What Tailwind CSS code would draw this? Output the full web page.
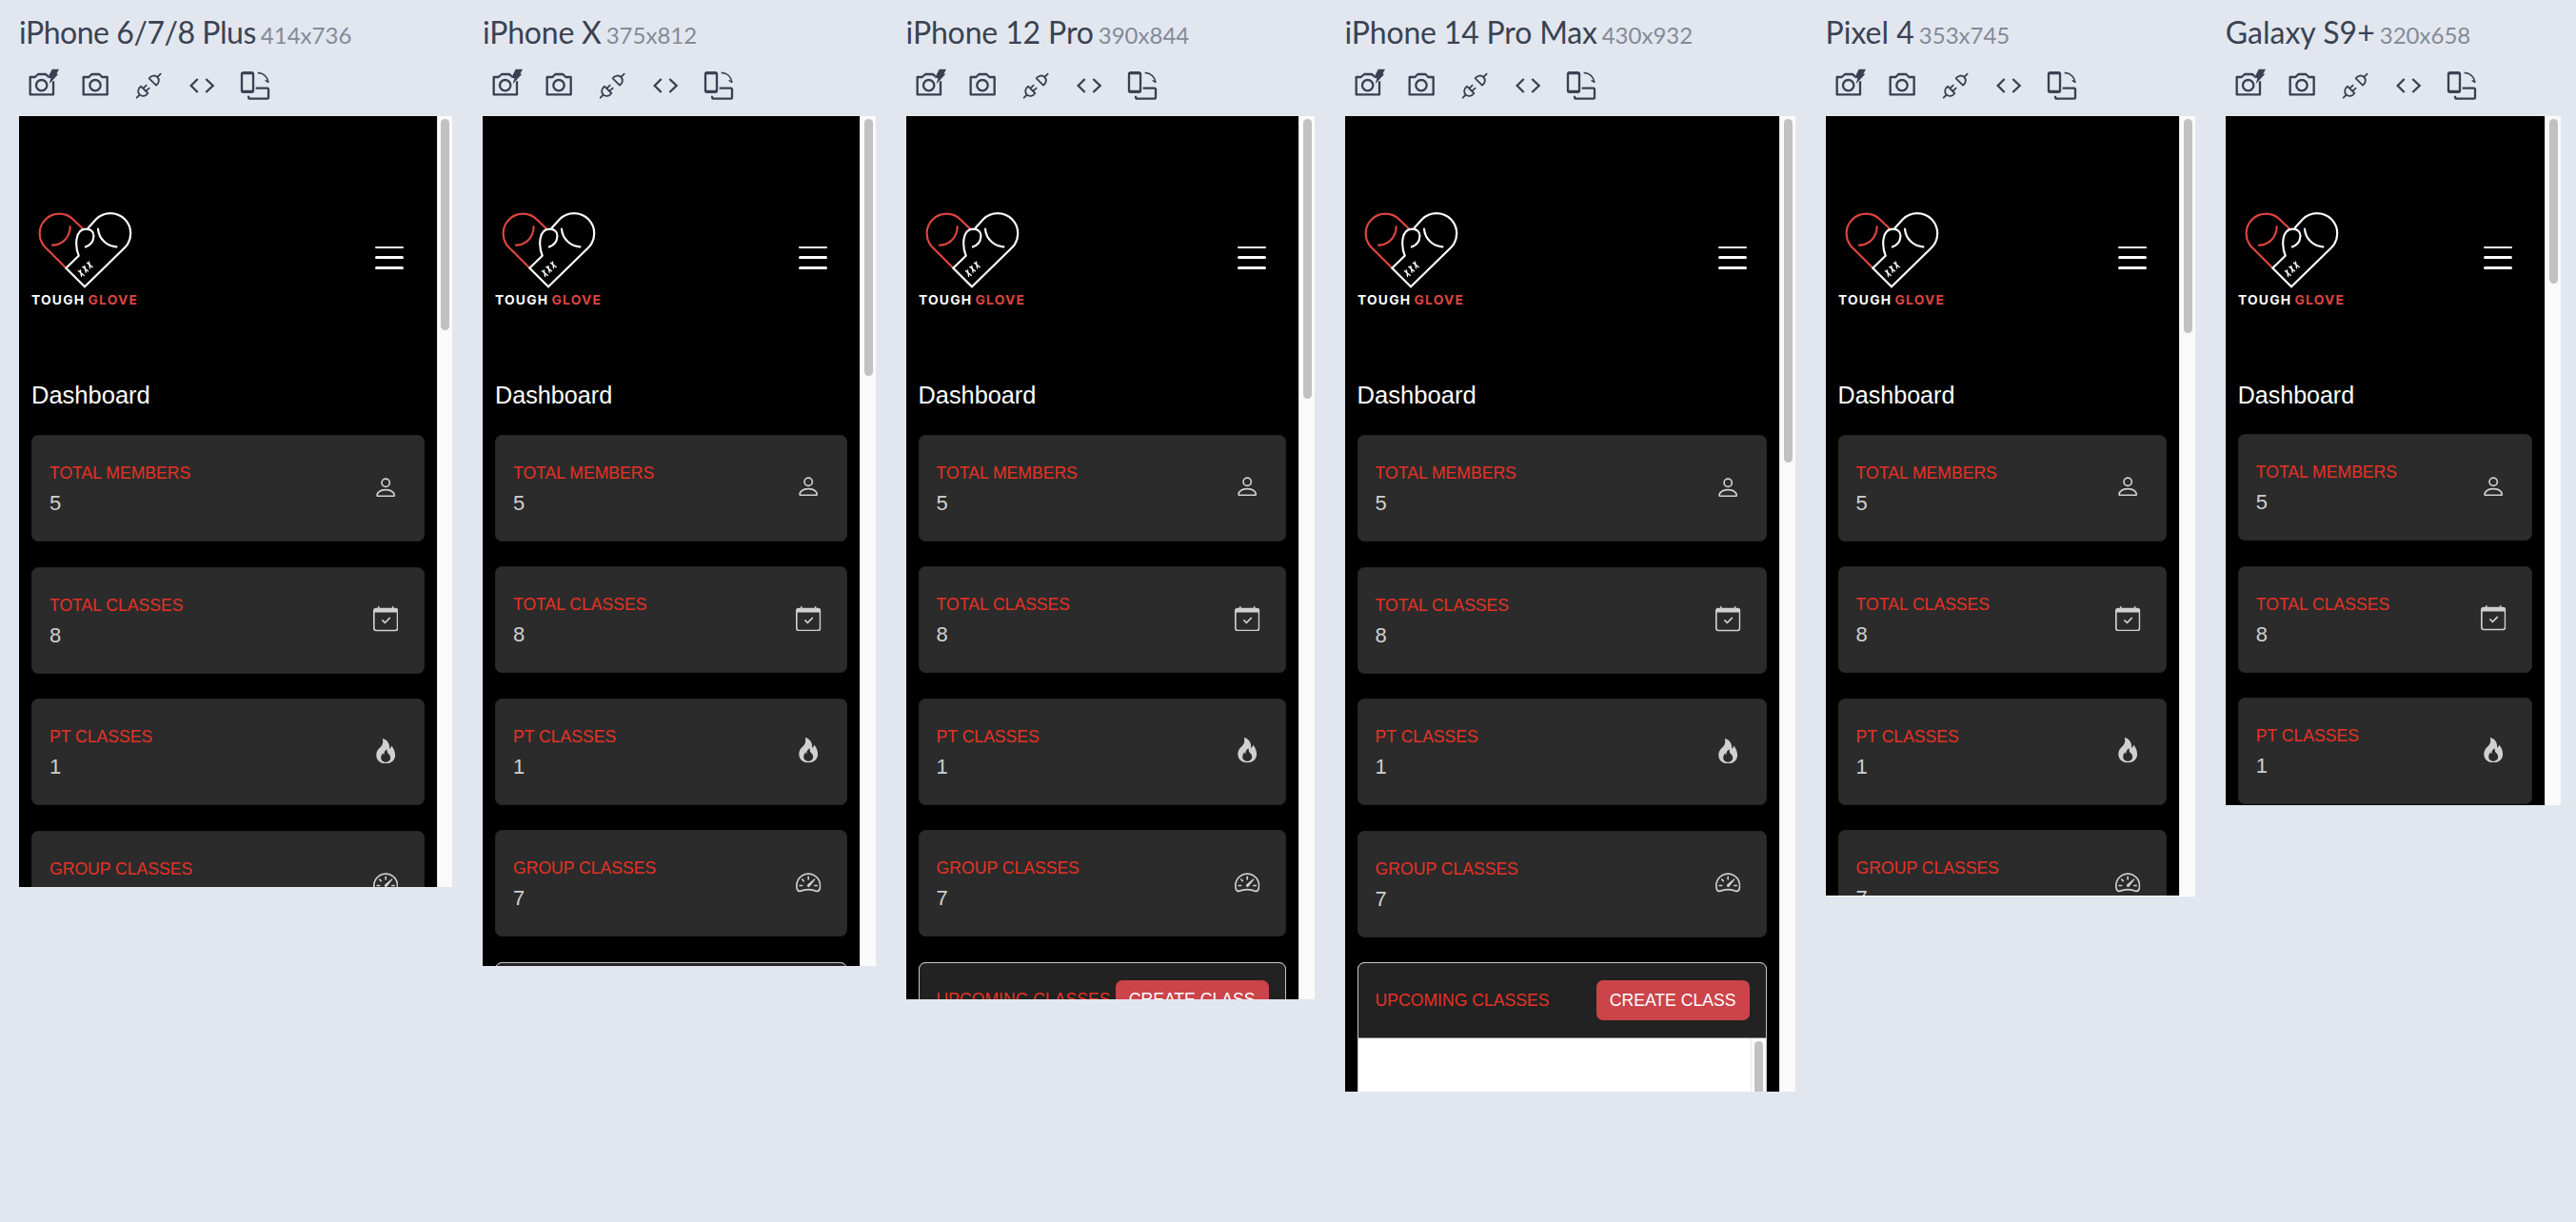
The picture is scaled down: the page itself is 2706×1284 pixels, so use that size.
<!DOCTYPE html>
<html lang="en">
<head>
<meta charset="utf-8">
<title>Responsive preview</title>
<script src="https://cdn.jsdelivr.net/npm/@tailwindcss/browser@4"></script>
</head>
<body class="bg-[#e2e7ef] h-[1284px] overflow-hidden">
<svg class="hidden" xmlns="http://www.w3.org/2000/svg">
  <symbol id="camera" viewBox="0 0 96 96"><g fill="none" stroke="currentColor" stroke-width="7" stroke-linejoin="round"><path d="M11 21H28L37 12H61L70 21H86V76H11Z"/><circle cx="48" cy="47" r="17"/></g></symbol>
  <symbol id="camera-flash" viewBox="0 0 108 108" overflow="visible"><g transform="translate(0 12)"><g fill="none" stroke="currentColor" stroke-width="7" stroke-linejoin="round"><path d="M84 34V76H11V21H26L36 12H60L68 19"/><circle cx="47" cy="47" r="17"/></g><path fill="currentColor" d="M80-4H102L94 11H100L71 43L76 24H66Z"/></g></symbol>
  <symbol id="plug" viewBox="0 0 96 96"><g fill="none" stroke="currentColor" stroke-width="5.5" stroke-linecap="round" stroke-linejoin="round"><path d="M11 86L19 78M24 50L46 72C39 82 27 83 20 76C13 69 14 57 24 50ZM32 56L41 47M40 65L50 56M50 25L72 47C82 40 83 28 76 21C69 14 57 15 50 25ZM77 20L86 11"/></g></symbol>
  <symbol id="code" viewBox="0 0 96 96"><path fill="none" stroke="currentColor" stroke-width="7" d="M35 27L14 48L35 69M61 27L83 48L61 69"/></symbol>
  <symbol id="rotate" viewBox="0 0 96 96"><g fill="none" stroke="currentColor" stroke-width="7"><rect x="6" y="7" width="36" height="61" rx="4"/><path stroke-width="9" d="M8 8H40M8 67H40"/><path d="M50 56H86Q90 56 90 60V85Q90 89 86 89H31Q27 89 27 80"/><path stroke-width="5" d="M56 7C74 8 87 20 90 38"/><path stroke-width="4" d="M80 31L90 38"/></g></symbol>
  <symbol id="person" viewBox="0 0 16 16"><path fill="currentColor" d="M8 8a3 3 0 1 0 0-6 3 3 0 0 0 0 6m2-3a2 2 0 1 1-4 0 2 2 0 0 1 4 0m4 8c0 1-1 1-1 1H3s-1 0-1-1 1-4 6-4 6 3 6 4m-1-.004c-.001-.246-.154-.986-.832-1.664C11.516 10.68 10.289 10 8 10s-3.516.68-4.168 1.332c-.678.678-.83 1.418-.832 1.664z"/></symbol>
  <symbol id="calendar" viewBox="0 0 16 16"><path fill="currentColor" d="M10.854 7.146a.5.5 0 0 1 0 .708l-3 3a.5.5 0 0 1-.708 0l-1.5-1.5a.5.5 0 1 1 .708-.708L7.5 9.793l2.646-2.647a.5.5 0 0 1 .708 0"/><path fill="currentColor" d="M3.5 0a.5.5 0 0 1 .5.5V1h8V.5a.5.5 0 0 1 1 0V1h1a2 2 0 0 1 2 2v11a2 2 0 0 1-2 2H2a2 2 0 0 1-2-2V3a2 2 0 0 1 2-2h1V.5a.5.5 0 0 1 .5-.5M1 4v10a1 1 0 0 0 1 1h12a1 1 0 0 0 1-1V4z"/></symbol>
  <symbol id="fire" viewBox="0 0 16 16"><path fill="currentColor" d="M8 16c3.314 0 6-2 6-5.5 0-1.5-.5-4-2.5-6 .25 1.5-1.25 2-1.25 2C11 4 9 .5 6 0c.357 2 .5 4-2 6-1.25 1-2 2.729-2 4.5C2 14 4.686 16 8 16m0-1c-1.657 0-3-1-3-2.75 0-.75.25-2 1.25-3C6.125 10 7 10.5 7 10.5c-.375-1.25.5-3.25 2-3.5-.179 1-.25 2 1 3 .625.5 1 1.364 1 2.25C11 14 9.657 15 8 15"/></symbol>
  <symbol id="speed" viewBox="0 0 16 16"><path fill="currentColor" d="M8 4a.5.5 0 0 1 .5.5V6a.5.5 0 0 1-1 0V4.5A.5.5 0 0 1 8 4M3.732 5.732a.5.5 0 0 1 .707 0l.915.914a.5.5 0 1 1-.708.708l-.914-.915a.5.5 0 0 1 0-.707M2 10a.5.5 0 0 1 .5-.5h1.586a.5.5 0 0 1 0 1H2.5A.5.5 0 0 1 2 10m9.500 0a.5.5 0 0 1 .5-.5h1.500a.5.5 0 0 1 0 1H12a.5.5 0 0 1-.5-.5m.754-4.246a.39.39 0 0 0-.527-.02L7.547 9.310a.91.91 0 1 0 1.302 1.258l3.434-4.297a.39.39 0 0 0-.029-.518z"/><path fill="currentColor" d="M0 10a8 8 0 1 1 15.547 2.661c-.442 1.253-1.845 1.602-2.932 1.25C11.309 13.488 9.475 13 8 13c-1.474 0-3.310.488-4.615.911-1.087.352-2.490.003-2.932-1.25A8 8 0 0 1 0 10m8-7a7 7 0 0 0-6.603 9.329c.203.575.923.876 1.680.63C4.397 12.533 6.358 12 8 12s3.604.532 4.923.96c.757.245 1.477-.056 1.680-.631A7 7 0 0 0 8 3"/></symbol>
  <symbol id="heart" viewBox="39 45 333 260"><g fill="none" stroke-width="6.5" stroke-linecap="round">
    <path stroke="#dc4540" d="M147 229L83 165A62 62 0 0 1 171 77L201 106M161 99C161 134 134 158 105 158"/>
    <path stroke="#fff" stroke-linecap="butt" stroke-linejoin="miter" d="M217 104L243 76A63 63 0 0 1 333 166L207 289L148 230L188 191C176 160 176 108 210 107C226 106 237 116 235 131C234 147 224 159 207 164"/>
    <path stroke="#fff" d="M249 107C252 141 279 161 307 163"/>
    <path stroke="#fff" stroke-width="4" stroke-linecap="butt" d="M186 238L206 254M193 235L197 258M199 225L219 241M206 222L211 245M213 212L233 228M220 209L224 232"/></g></symbol>
</svg>

<main id="devices" class="flex items-start gap-8 pl-5 pt-[13px]"></main>

<script>
const devices = [
  { name: 'iPhone 6/7/8 Plus', size: '414x736', w: 455, h: 810, thumb: 222, top: 60, h1: 25.5, track: -0.46 },
  { name: 'iPhone X', size: '375x812', w: 412.6, h: 893, thumb: 270, top: 59.5, h1: 25.2, track: -0.2 },
  { name: 'iPhone 12 Pro', size: '390x844', w: 429, h: 928, thumb: 294, top: 59.5, h1: 25.3, track: -0.13 },
  { name: 'iPhone 14 Pro Max', size: '430x932', w: 473, h: 1025, thumb: 361, top: 60, h1: 25.6, track: -0.18 },
  { name: 'Pixel 4', size: '353x745', w: 388.2, h: 820, thumb: 225, top: 59.5, h1: 25.1, track: 0, edge: 'border-b border-white' },
  { name: 'Galaxy S9+', size: '320x658', w: 352, h: 724, thumb: 173, top: 59, h1: 25, track: 0 },
];
const stats = [
  ['TOTAL MEMBERS', 5, 'person'],
  ['TOTAL CLASSES', 8, 'calendar'],
  ['PT CLASSES', 1, 'fire'],
  ['GROUP CLASSES', 7, 'speed'],
];
const card = ([label, value, icon]) => `
  <div class="flex h-[112px] shrink-0 items-center justify-between rounded-[7px] border border-[#252525] bg-[#2b2b2b] pl-[18px] pr-[26.5px]">
    <div class="mt-[3px]">
      <div class="text-[17.6px] leading-[28px] text-[#e53225] whitespace-nowrap">${label}</div>
      <div class="text-[22px] leading-[35px] text-[#d0d0d0]">${value}</div>
    </div>
    <svg class="size-[26.4px] text-[#d0d0d0] -mt-0.5"><use href="#${icon}"/></svg>
  </div>`;
document.getElementById('devices').innerHTML = devices.map(d => `
  <section class="shrink-0" style="width:${d.w}px">
    <h2 class="flex h-[45px] items-baseline gap-[5px] whitespace-nowrap font-['Lato',sans-serif] text-[32px] leading-[42px] text-[#3a4252]"><span style="letter-spacing:${d.track}px">${d.name}</span><span class="text-[24px] text-[#848a96]">${d.size}</span></h2>
    <div class="flex h-16 gap-6 pl-2 pt-4 text-[#3a4050]">
      <svg class="-mt-1 h-9 w-9 -mr-1 shrink-0"><use href="#camera-flash"/></svg>
      <svg class="size-8"><use href="#camera"/></svg>
      <svg class="size-8"><use href="#plug"/></svg>
      <svg class="size-8"><use href="#code"/></svg>
      <svg class="size-8"><use href="#rotate"/></svg>
    </div>
    <div class="flex overflow-hidden bg-black font-['Liberation_Sans',Arial,sans-serif] ${d.edge || ''}" style="height:${d.h}px">
      <div class="flex min-w-0 grow flex-col px-[13px]">
        <header class="flex h-[275px] shrink-0 items-start justify-between pt-[98px]">
          <div class="w-[111px]">
            <svg class="h-[86.7px] w-[111px]"><use href="#heart"/></svg>
            <svg class="h-[18px] w-[112px] font-['Inter',sans-serif] text-[13.8px] font-bold"><text x="0" y="13.300" textLength="55" fill="#fff">TOUGH</text><text x="59.500" y="13.300" textLength="51.500" fill="#dc4540">GLOVE</text></svg>
          </div>
          <div class="mr-[21.5px] mt-[37.5px] flex flex-col gap-[8.6px] pt-[1px]">
            <span class="h-[2.4px] w-[30px] rounded-full bg-white"></span>
            <span class="h-[2.4px] w-[30px] rounded-full bg-white"></span>
            <span class="h-[2.4px] w-[30px] rounded-full bg-white"></span>
          </div>
        </header>
        <h1 class="shrink-0 leading-[36px] text-white" style="height:${d.top}px;font-size:${d.h1}px">Dashboard</h1>
        <div class="flex flex-col gap-[26.5px]">
          ${stats.map(card).join('')}
          <div class="h-[300px] shrink-0 overflow-hidden rounded-t-[7px] border border-[#c4c4c4] bg-white">
            <div class="flex h-[79px] items-center justify-between border-b border-[#777] bg-[#222] pl-[18px] pr-[17.5px]">
              <span class="text-[17.6px] text-[#e53225] whitespace-nowrap">UPCOMING CLASSES</span>
              <span class="flex h-[42px] w-[161px] shrink-0 items-center justify-center rounded-[7px] bg-[#cb444a] text-[17.6px] text-white whitespace-nowrap">CREATE CLASS</span>
            </div>
            <div class="flex h-full justify-end"><div class="w-4 border-l border-[#e8e8e8] bg-[#fafafa] pl-[3px] pt-[3px]"><div class="h-[200px] w-[9px] rounded-full bg-[#c1c1c1]"></div></div></div>
          </div>
        </div>
      </div>
      <div class="w-[16.5px] shrink-0 border-l border-[#e4e4e4] bg-[#fafafa] pl-[3.5px] pt-[3px]">
        <div class="w-[9px] rounded-full bg-[#c1c1c1]" style="height:${d.thumb}px"></div>
      </div>
    </div>
  </section>`).join('');
</script>
</body>
</html>
